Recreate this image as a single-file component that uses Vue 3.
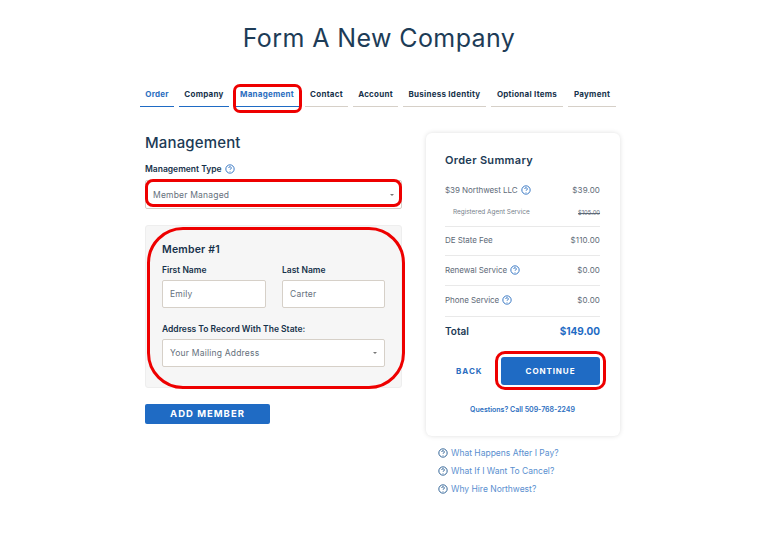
<script setup>
const tabs = [
  { label: 'Order', w: 34, done: true },
  { label: 'Company', w: 50, done: true },
  { label: 'Management', w: 66, done: true, current: true },
  { label: 'Contact', w: 43 },
  { label: 'Account', w: 45 },
  { label: 'Business Identity', w: 83 },
  { label: 'Optional Items', w: 72 },
  { label: 'Payment', w: 48 },
]
const links = ['What Happens After I Pay?', 'What If I Want To Cancel?', 'Why Hire Northwest?']
</script>

<template>
  <div class="page">
    <h1 class="title">Form A New Company</h1>

    <nav class="tabs">
      <div
        v-for="t in tabs"
        :key="t.label"
        class="tab"
        :class="{ done: t.done, current: t.current, first: t.label === 'Order' }"
        :style="{ width: t.w + 'px' }"
      >
        {{ t.label }}
        <span v-if="t.current" class="mark mark-tab"></span>
      </div>
    </nav>

    <div class="columns">
      <main class="left">
        <h2 class="heading">Management</h2>
        <div class="label type-label">
          Management Type
          <svg class="help" viewBox="0 0 12 12"><circle cx="6" cy="6" r="5" /><path d="M4.5 4.8a1.5 1.5 0 1 1 2.3 1.2c-.5.3-.8.6-.8 1.1M6 8.4v.7" /></svg>
        </div>
        <div class="select type-select">
          Member Managed
          <span class="caret"></span>
          <span class="mark mark-select"></span>
        </div>

        <section class="member">
          <h3 class="member-title">Member #1</h3>
          <div class="names">
            <div class="field">
              <div class="label">First Name</div>
              <div class="input">Emily</div>
            </div>
            <div class="field">
              <div class="label">Last Name</div>
              <div class="input">Carter</div>
            </div>
          </div>
          <div class="label addr-label">Address To Record With The State:</div>
          <div class="select addr-select">
            Your Mailing Address
            <span class="caret"></span>
          </div>
          <span class="mark mark-member"></span>
        </section>

        <button class="add">ADD MEMBER</button>
      </main>

      <aside class="right">
        <div class="card">
          <h3 class="summary">Order Summary</h3>

          <div class="row first-row">
            <span class="name">$39 Northwest LLC
              <svg class="help" viewBox="0 0 12 12"><circle cx="6" cy="6" r="5" /><path d="M4.5 4.8a1.5 1.5 0 1 1 2.3 1.2c-.5.3-.8.6-.8 1.1M6 8.4v.7" /></svg>
            </span>
            <span class="price">$39.00</span>
          </div>
          <div class="row sub-row">
            <span class="sub-name">Registered Agent Service</span>
            <s class="sub-price">$105.00</s>
          </div>
          <div class="row line line-fee"><span class="name">DE State Fee</span><span class="price">$110.00</span></div>
          <div class="row line">
            <span class="name">Renewal Service
              <svg class="help" viewBox="0 0 12 12"><circle cx="6" cy="6" r="5" /><path d="M4.5 4.8a1.5 1.5 0 1 1 2.3 1.2c-.5.3-.8.6-.8 1.1M6 8.4v.7" /></svg>
            </span>
            <span class="price">$0.00</span>
          </div>
          <div class="row line line-phone">
            <span class="name">Phone Service
              <svg class="help" viewBox="0 0 12 12"><circle cx="6" cy="6" r="5" /><path d="M4.5 4.8a1.5 1.5 0 1 1 2.3 1.2c-.5.3-.8.6-.8 1.1M6 8.4v.7" /></svg>
            </span>
            <span class="price">$0.00</span>
          </div>
          <div class="row total">
            <span>Total</span>
            <span class="total-price">$149.00</span>
          </div>

          <div class="actions">
            <span class="back">BACK</span>
            <button class="continue">
              CONTINUE
              <span class="mark mark-continue"></span>
            </button>
          </div>
          <div class="call">Questions? Call 509-768-2249</div>
        </div>

        <ul class="links">
          <li v-for="l in links" :key="l">
            <svg class="help dark" viewBox="0 0 12 12"><circle cx="6" cy="6" r="5" /><path d="M4.5 4.8a1.5 1.5 0 1 1 2.3 1.2c-.5.3-.8.6-.8 1.1M6 8.4v.7" /></svg>
            {{ l }}
          </li>
        </ul>
      </aside>
    </div>
  </div>
</template>

<style>
html, body { margin: 0; background: #fff; }
</style>

<style scoped>
.page {
  width: 761px;
  height: 545px;
  overflow: hidden;
  box-sizing: border-box;
  padding-top: 22px;
  font-family: Inter, "Open Sans", sans-serif;
  color: #1c3a55;
}
.title {
  margin: 0;
  width: 758px;
  text-align: center;
  font-size: 25px;
  line-height: 33px;
  font-weight: 400;
  letter-spacing: 0.4px;
  color: #1d3c57;
}
.tabs {
  display: flex;
  gap: 5px;
  margin: 27px 0 0 140px;
}
.tab {
  position: relative;
  box-sizing: border-box;
  height: 25px;
  line-height: 25px;
  text-align: center;
  white-space: nowrap;
  font-size: 8px;
  font-weight: 700;
  letter-spacing: 0.25px;
  color: #17324b;
  border-bottom: 1px solid #d6d0c8;
}
.tab.done { border-bottom-color: #1f6bc4; }
.tab.first, .tab.current { color: #2b6ec0; }
.mark {
  position: absolute;
  box-sizing: border-box;
  border: 3px solid #ee0000;
  pointer-events: none;
}
.mark-tab { left: -1px; top: 2px; width: 69px; height: 29px; border-radius: 7px; }
.columns {
  display: flex;
  margin: 26px 0 0 145px;
  gap: 24px;
  align-items: flex-start;
}
.left { width: 257px; }
.heading {
  margin: 0;
  font-size: 15px;
  line-height: 19px;
  font-weight: 500;
  letter-spacing: 0.15px;
  color: #1c3a55;
}
.label {
  font-size: 8.5px;
  font-weight: 600;
  line-height: 12px;
  color: #17324b;
}
.type-label { margin-top: 11px; display: flex; align-items: center; gap: 3px; }
.select, .input {
  position: relative;
  box-sizing: border-box;
  background: #fff;
  border: 1px solid #d6d0c8;
  border-radius: 2px;
  font-size: 8.5px;
  letter-spacing: 0.2px;
  color: #65707c;
}
.select { display: flex; align-items: center; }
.type-select { margin-top: 5px; height: 29px; padding-left: 7px; }
.caret {
  position: absolute;
  right: 7px;
  top: 50%;
  margin-top: -1px;
  border-left: 2px solid transparent;
  border-right: 2px solid transparent;
  border-top: 2px solid #777;
}
.mark-select { left: -1px; top: -2px; width: 257px; height: 28px; border-radius: 8px; }
.member {
  position: relative;
  box-sizing: border-box;
  margin-top: 16px;
  height: 163px;
  padding: 17px 16px 0;
  background: #f6f6f6;
  border: 1px solid #eeeeee;
  border-radius: 3px;
}
.member-title {
  margin: 0;
  font-size: 10.5px;
  line-height: 14px;
  font-weight: 600;
  letter-spacing: 0.2px;
  color: #17324b;
}
.names {
  display: grid;
  grid-template-columns: 104px 103px;
  gap: 16px;
  margin-top: 7px;
}
.input {
  margin-top: 4px;
  height: 28px;
  line-height: 26px;
  padding-left: 7px;
}
.addr-label { margin-top: 15px; }
.addr-select { margin-top: 4px; height: 28px; padding-left: 7px; }
.mark-member { left: 1px; top: 1px; width: 258px; height: 162px; border-radius: 36px; }
.add {
  display: block;
  margin-top: 16px;
  width: 125px;
  height: 20px;
  padding: 0 0 1px;
  border: 0;
  border-radius: 2px;
  background: #1f6bc4;
  color: #fff;
  font: 700 9.5px Inter, sans-serif;
  letter-spacing: 1px;
}
.right { width: 194px; }
.card {
  box-sizing: border-box;
  height: 303px;
  padding: 20px 20px 0 19px;
  background: #fff;
  border-radius: 6px;
  box-shadow: 0 0 5px rgba(0, 0, 0, 0.13);
}
.summary {
  margin: 0;
  font-size: 11px;
  line-height: 14px;
  font-weight: 600;
  letter-spacing: 0.3px;
  color: #1c3a55;
}
.row {
  display: flex;
  justify-content: space-between;
  align-items: center;
  font-size: 8px;
  color: #5e6a78;
}
.name { display: flex; align-items: center; gap: 3px; letter-spacing: -0.05px; }
.price { letter-spacing: 0.1px; }
.first-row { margin-top: 16px; height: 14px; }
.sub-row { margin-top: 9px; height: 12px; padding-left: 8px; padding-bottom: 8px; box-sizing: content-box; }
.sub-name { font-size: 6.4px; color: #77818c; }
.sub-price { font-size: 5.8px; }
.line { height: 30px; padding-bottom: 2px; border-top: 1px solid #e9e9e9; box-sizing: border-box; }
.line-fee { height: 29px; }
.line-phone { height: 31px; }
.total {
  height: 30px;
  padding-bottom: 2px;
  box-sizing: border-box;
  border-top: 1px solid #e9e9e9;
  font-size: 10px;
  font-weight: 600;
  color: #1c3a55;
}
.total-price { color: #1f6bc4; font-size: 10px; font-weight: 700; }
.actions {
  display: flex;
  align-items: center;
  margin-top: 11px;
}
.back {
  width: 56px;
  padding-left: 11px;
  box-sizing: border-box;
  font-size: 8px;
  font-weight: 700;
  letter-spacing: 1px;
  color: #2b6ec0;
}
.continue {
  position: relative;
  width: 99px;
  height: 28px;
  padding: 0;
  border: 0;
  border-radius: 3px;
  background: #1f6bc4;
  color: #fff;
  font: 700 8px Inter, sans-serif;
  letter-spacing: 0.9px;
}
.mark-continue { left: -6px; top: -6px; width: 111px; height: 39px; border-radius: 10px; }
.call {
  margin-top: 20px;
  text-align: center;
  font-size: 7px;
  font-weight: 600;
  color: #2b6ec0;
}
.links {
  list-style: none;
  margin: 8px 0 0 12px;
  padding: 0;
  font-size: 8.5px;
  color: #5a8fcf;
}
.links li { display: flex; align-items: center; gap: 3px; height: 18px; }
.help {
  width: 10px;
  height: 10px;
  flex: none;
  fill: none;
  stroke: #2b6ec0;
  stroke-width: 1.1;
}
.help.dark { stroke: #22598f; }
</style>
